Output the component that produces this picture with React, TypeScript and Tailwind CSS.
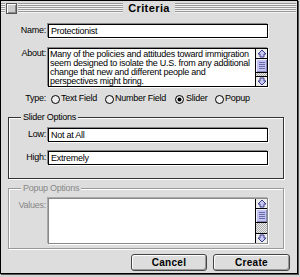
import React from "react";

function Stripes({ className = "" }: { className?: string }) {
  return (
    <div
      className={
        "h-[10px] bg-[repeating-linear-gradient(to_bottom,#999_0px,#999_1px,#f2f2f2_1px,#f2f2f2_2px)] " +
        className
      }
    />
  );
}

function Arrow({ down = false }: { down?: boolean }) {
  return (
    <svg width="10" height="9" viewBox="0 0 10 9" className="block">
      <polygon
        points={down ? "5,8 9,4 7,4 7,1 3,1 3,4 1,4" : "5,1 9,5 7,5 7,8 3,8 3,5 1,5"}
        fill="#c8c8f4"
        stroke="#3a3a8a"
        strokeWidth="1"
        strokeLinejoin="miter"
      />
    </svg>
  );
}

function Scrollbar() {
  return (
    <div className="w-[12px] border-l border-black flex flex-col bg-[#e8e8e8]">
      <div className="h-[10px] border-b border-black flex items-center justify-center bg-[#eeeeee]">
        <Arrow />
      </div>
      <div className="h-[14px] border-b border-black bg-[#c4c4f2] shadow-[inset_1px_1px_0_#eeeeff,inset_-1px_-1px_0_#8888bb] flex flex-col items-center justify-center gap-[1px]">
        <div className="w-[6px] h-[1px] bg-[#6a6aa8]" />
        <div className="w-[6px] h-[1px] bg-[#6a6aa8]" />
        <div className="w-[6px] h-[1px] bg-[#6a6aa8]" />
        <div className="w-[6px] h-[1px] bg-[#6a6aa8]" />
      </div>
      <div className="flex-1 bg-[repeating-conic-gradient(#aaaaaa_0_25%,#eeeeee_0_50%)] bg-[length:2px_2px]" />
      <div className="h-[10px] border-t border-black flex items-center justify-center bg-[#eeeeee]">
        <Arrow down />
      </div>
    </div>
  );
}

function Radio({ checked = false }: { checked?: boolean }) {
  return (
    <svg width="9" height="9" viewBox="0 0 9 9" className="block shrink-0">
      <circle cx="4.5" cy="4.5" r="4" fill="#eeeeee" stroke="#000" strokeWidth="1" />
      {checked && <circle cx="4.5" cy="4.5" r="2" fill="#000" />}
    </svg>
  );
}

const field =
  "border border-black bg-white shadow-[-1px_-1px_0_#888888,1px_1px_0_#ffffff]";

export default function App() {
  return (
    <div className="w-[300px] h-[277px] bg-[#d4d4d4] font-['Liberation_Sans',Arial,sans-serif] text-[9px] tracking-[-0.25px] text-black">
      <div className="w-[298px] h-[274px] border border-black bg-[#dddddd] shadow-[1px_1px_0_#555555] flex flex-col">
        {/* Title bar */}
        <div className="h-[14px] flex items-center shrink-0">
          <Stripes className="w-[4px]" />
          <div className="ml-[1px] w-[11px] h-[11px] border border-[#555] bg-[#cccccc] shadow-[inset_1px_1px_0_#ffffff,inset_-1px_-1px_0_#888888]" />
          <Stripes className="ml-[1px] w-[105px]" />
          <div className="w-[52px] text-center font-bold text-[11px] tracking-[0.4px] leading-[14px]">
            Criteria
          </div>
          <Stripes className="flex-1 mr-[1px]" />
        </div>

        {/* Name */}
        <div className="mt-[9px] flex items-center h-[14px]">
          <div className="w-[45px] mr-[2px] text-right">Name:</div>
          <div className={field + " w-[220px] h-[14px] pl-[2px] leading-[12px]"}>Protectionist</div>
        </div>

        {/* About */}
        <div className="mt-[10px] flex items-start">
          <div className="w-[45px] mr-[2px] text-right pt-[1px] leading-[9px]">About:</div>
          <div className={field + " w-[220px] h-[39px] flex"}>
            <div className="flex-1 pl-[1px] pt-[1px] leading-[9px]">
              Many of the policies and attitudes toward immigration
              <br />
              seem designed to isolate the U.S. from any additional
              <br />
              change that new and different people and
              <br />
              perspectives might bring.
            </div>
            <Scrollbar />
          </div>
        </div>

        {/* Type */}
        <div className="mt-[6px] flex items-center h-[12px]">
          <div className="w-[45px] mr-[5px] text-right">Type:</div>
          <div className="w-[54px] flex items-center gap-[1px]">
            <Radio />
            <span>Text Field</span>
          </div>
          <div className="w-[70px] flex items-center gap-[1px]">
            <Radio />
            <span>Number Field</span>
          </div>
          <div className="w-[40px] flex items-center gap-[2px]">
            <Radio checked />
            <span>Slider</span>
          </div>
          <div className="flex items-center gap-[1px]">
            <Radio />
            <span>Popup</span>
          </div>
        </div>

        {/* Slider Options */}
        <div className="mt-[12px] ml-[7px] w-[276px] h-[62px] border border-[#333] shadow-[1px_1px_0_#ffffff,inset_1px_1px_0_#ffffff] relative pt-[10px]">
          <span className="absolute left-[12px] -top-[6px] px-[2px] bg-[#dddddd] leading-[11px]">
            Slider Options
          </span>
          <div className="flex items-center h-[14px]">
            <div className="w-[37px] mr-[2px] text-right">Low:</div>
            <div className={field + " w-[220px] h-[14px] pl-[2px] leading-[12px]"}>Not at All</div>
          </div>
          <div className="mt-[9px] flex items-center h-[14px]">
            <div className="w-[37px] mr-[2px] text-right">High:</div>
            <div className={field + " w-[220px] h-[14px] pl-[2px] leading-[12px]"}>Extremely</div>
          </div>
        </div>

        {/* Popup Options (disabled) */}
        <div className="mt-[9px] ml-[7px] w-[276px] h-[61px] border border-[#999] shadow-[1px_1px_0_#ffffff,inset_1px_1px_0_#ffffff] relative pt-[9px]">
          <span className="absolute left-[12px] -top-[6px] px-[2px] bg-[#dddddd] leading-[11px] text-[#888]">
            Popup Options
          </span>
          <div className="flex items-start">
            <div className="w-[37px] mr-[2px] text-right text-[#888] pt-[2px] leading-[10px]">Values:</div>
            <div className="border border-[#888] bg-white shadow-[-1px_-1px_0_#aaaaaa,1px_1px_0_#ffffff] w-[220px] h-[46px] flex">
              <div className="flex-1" />
              <Scrollbar />
            </div>
          </div>
        </div>

        {/* Buttons */}
        <div className="mt-[5px] flex justify-end pr-[7px] gap-[6px]">
          <div className="w-[76px] h-[17px] border border-[#444] rounded-[3px] bg-[#dddddd] shadow-[inset_1px_1px_0_#ffffff,inset_-1px_-1px_0_#999999] flex items-center justify-center font-bold text-[10px] tracking-[0.3px]">
            Cancel
          </div>
          <div className="w-[77px] h-[17px] border border-[#444] rounded-[3px] bg-[#dddddd] shadow-[inset_1px_1px_0_#ffffff,inset_-1px_-1px_0_#999999] flex items-center justify-center font-bold text-[10px] tracking-[0.3px]">
            Create
          </div>
        </div>
      </div>
    </div>
  );
}
